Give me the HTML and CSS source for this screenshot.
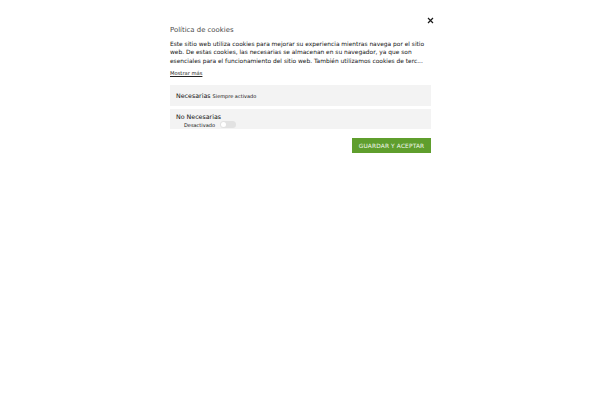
FILE: index.html
```html
<!DOCTYPE html>
<html lang="es">
<head>
<meta charset="utf-8">
<link rel="stylesheet" href="styles.css">
</head>
<body>
<div class="modal">
  <div class="close-row"><button class="close" aria-label="Cerrar"><svg width="7" height="7" viewBox="0 0 7 7"><path d="M1 1L6 6M6 1L1 6" stroke="#1a1a1a" stroke-width="1.2"/></svg></button></div>
  <h2 class="title">Política de cookies</h2>
  <p class="desc">Este sitio web utiliza cookies para mejorar su experiencia mientras navega por el sitio web. De estas cookies, las necesarias se almacenan en su navegador, ya que son esenciales para el funcionamiento del sitio web. También utilizamos cookies de terc...</p>
  <a class="more" href="#">Mostrar más</a>
  <div class="section">
    <span class="sec-title">Necesarias</span>&nbsp;<span class="small">Siempre activado</span>
  </div>
  <div class="section sec2">
    <div class="sec-title">No Necesarias</div>
    <div class="toggle-row"><span class="small">Desactivado</span><span class="toggle"></span></div>
  </div>
  <div class="actions"><button class="accept">GUARDAR Y ACEPTAR</button></div>
</div>
</body>
</html>
```
FILE: styles.css
```css
html, body { margin: 0; padding: 0; background: #fff; }
body { font-family: "DejaVu Sans", Verdana, sans-serif; color: #222; }
.modal { width: 261px; margin-left: 170px; padding-top: 15px; }
.close-row { display: flex; justify-content: flex-end; height: 10px; }
.close { border: 0; background: none; padding: 0; margin-right: -3px; width: 7px; height: 10px; display: flex; align-items: center; }
.title { font-size: 6.9px; font-weight: normal; color: #4a4a4a; margin: 0; line-height: 10px; }
.desc { font-size: 5.9px; line-height: 8.5px; margin: 4.75px 0 0; color: #111; }
.more { display: block; font-size: 5.2px; color: #222; margin-top: 3.75px; line-height: 8px; width: max-content; }
.section { background: #f3f3f3; margin-top: 8px; height: 21px; box-sizing: border-box; padding: 0 6px; font-size: 6.3px; color: #111; display: flex; align-items: center; }
.section.sec2 { margin-top: 3px; height: 20px; padding-top: 4px; display: block; }
.sec-title { line-height: 8px; }
.small { font-size: 5px; }
.toggle-row { display: flex; align-items: center; height: 7px; padding-left: 8px; gap: 5px; }
.toggle { width: 16px; height: 7px; border-radius: 3.5px; background: #e2e2e2; position: relative; }
.toggle::before { content: ""; position: absolute; left: 1px; top: 1px; width: 5px; height: 5px; border-radius: 50%; background: #fff; }
.actions { display: flex; justify-content: flex-end; margin-top: 9px; }
.accept { background: #5f9e2d; color: #f4f9ef; border: 0; font-family: "DejaVu Sans", sans-serif; font-size: 5.85px; height: 15px; width: 79px; padding: 0; letter-spacing: 0.15px; }
```
